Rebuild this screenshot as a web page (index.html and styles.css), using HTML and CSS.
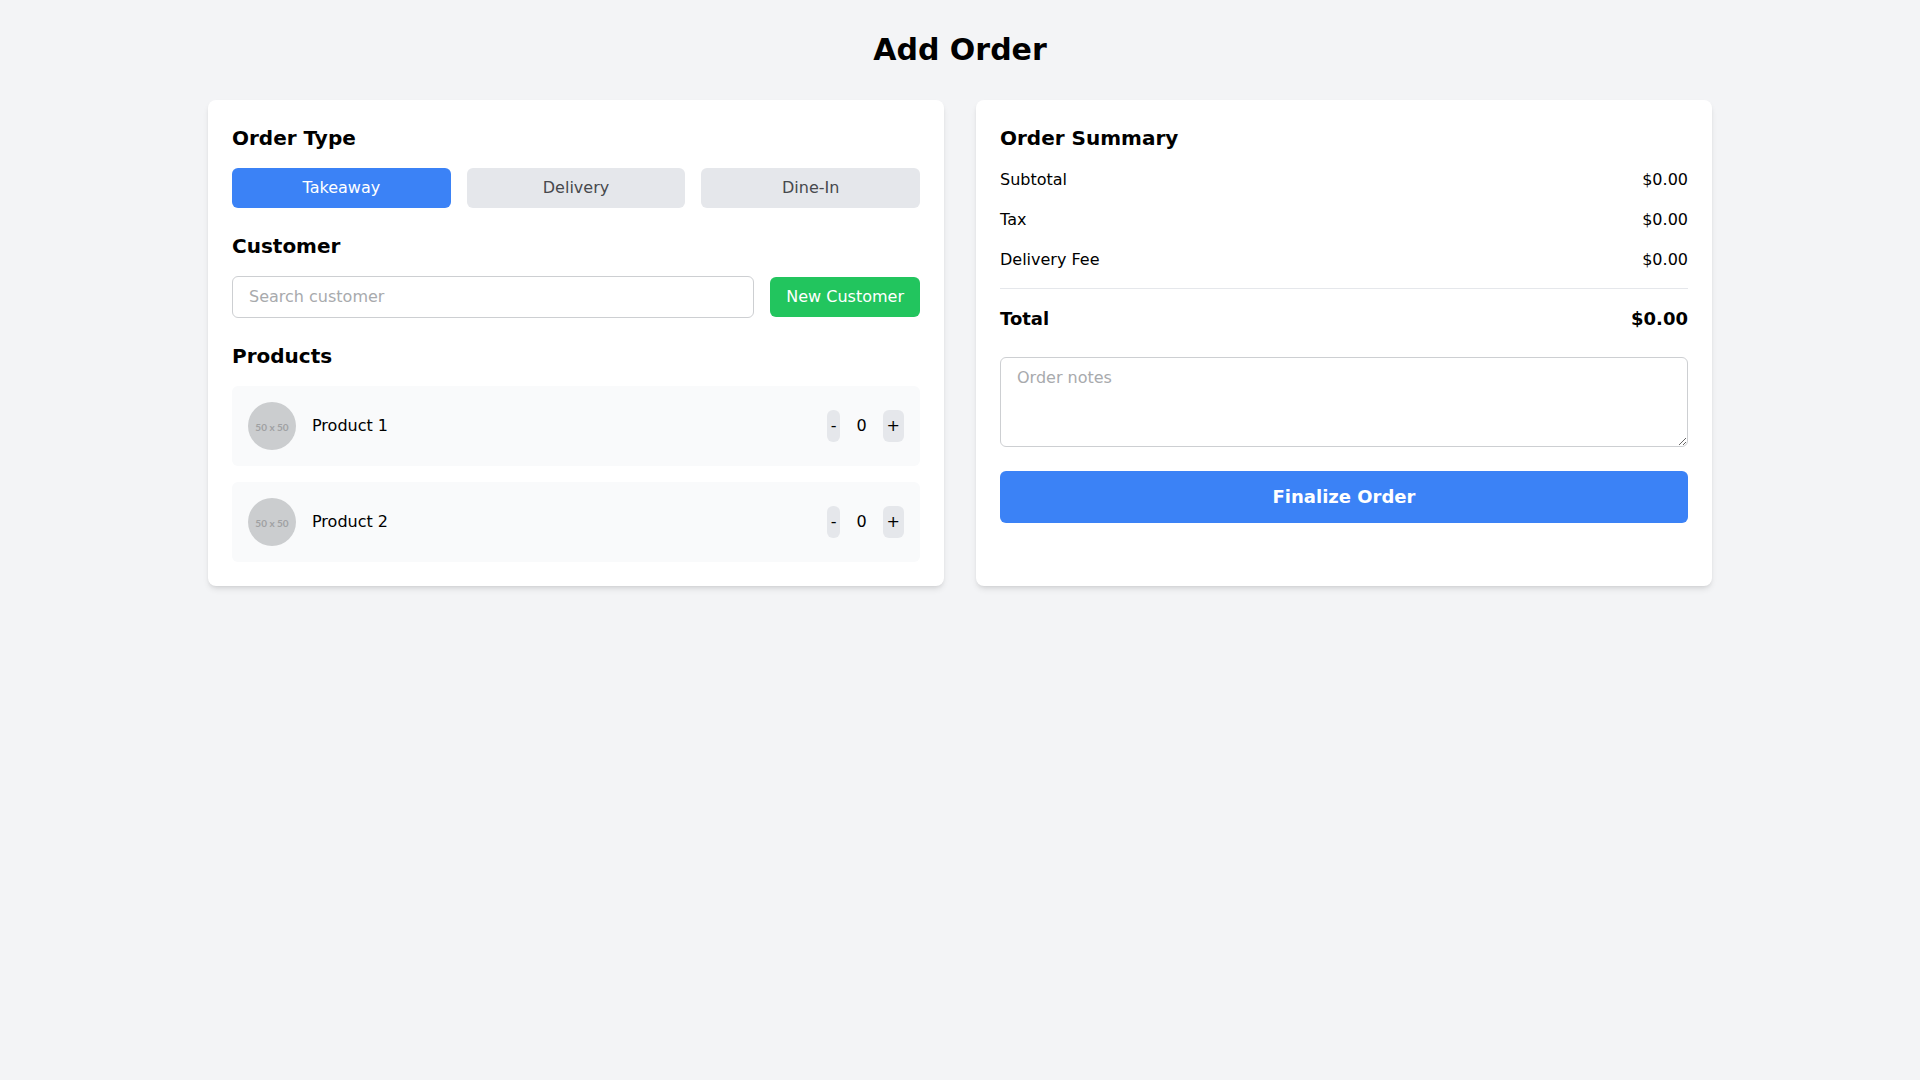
FILE: index.html
```html
<!DOCTYPE html>
<html lang="en">
<head>
<meta charset="UTF-8">
<meta name="viewport" content="width=device-width, initial-scale=1.0">
<title>Add Order</title>
<link rel="stylesheet" href="styles.css">
</head>
<body>
<div class="container">
    <h1>Add Order</h1>
    <form class="order-grid">
        <div class="card">
            <section>
                <h2>Order Type</h2>
                <div class="order-types">
                    <button type="button" class="btn btn-type active">Takeaway</button>
                    <button type="button" class="btn btn-type">Delivery</button>
                    <button type="button" class="btn btn-type">Dine-In</button>
                </div>
            </section>

            <section>
                <h2>Customer</h2>
                <div class="customer-row">
                    <input type="text" class="field" placeholder="Search customer" aria-label="Search customer">
                    <button type="button" class="btn btn-new">New Customer</button>
                </div>
            </section>

            <section>
                <h2>Products</h2>
                <div class="products">
                    <div class="product">
                        <div class="product-info">
                            <svg class="product-img" viewBox="0 0 48 48" role="img" aria-label="Product 1">
                                <circle cx="24" cy="24" r="24"/>
                                <text x="24" y="29">50 x 50</text>
                            </svg>
                            <span>Product 1</span>
                        </div>
                        <div class="quantity">
                            <button type="button" class="btn-qty" aria-label="Remove one Product 1">-</button>
                            <span>0</span>
                            <button type="button" class="btn-qty" aria-label="Add one Product 1">+</button>
                        </div>
                    </div>
                    <div class="product">
                        <div class="product-info">
                            <svg class="product-img" viewBox="0 0 48 48" role="img" aria-label="Product 2">
                                <circle cx="24" cy="24" r="24"/>
                                <text x="24" y="29">50 x 50</text>
                            </svg>
                            <span>Product 2</span>
                        </div>
                        <div class="quantity">
                            <button type="button" class="btn-qty" aria-label="Remove one Product 2">-</button>
                            <span>0</span>
                            <button type="button" class="btn-qty" aria-label="Add one Product 2">+</button>
                        </div>
                    </div>
                </div>
            </section>
        </div>

        <div class="card">
            <h2>Order Summary</h2>
            <div class="summary-row">
                <span>Subtotal</span>
                <span>$0.00</span>
            </div>
            <div class="summary-row">
                <span>Tax</span>
                <span>$0.00</span>
            </div>
            <div class="summary-row">
                <span>Delivery Fee</span>
                <span>$0.00</span>
            </div>
            <div class="summary-row total">
                <span>Total</span>
                <span>$0.00</span>
            </div>
            <textarea class="field notes" rows="3" placeholder="Order notes" aria-label="Order notes"></textarea>
            <button type="submit" class="btn btn-finalize">Finalize Order</button>
        </div>
    </form>
</div>
<script>
// Switch the selected order type
const typeButtons = document.querySelectorAll('.btn-type');
typeButtons.forEach(button => {
    button.addEventListener('click', () => {
        typeButtons.forEach(b => b.classList.remove('active'));
        button.classList.add('active');
    });
});

// Quantity buttons
document.querySelectorAll('.quantity').forEach(box => {
    const [minus, plus] = box.querySelectorAll('button');
    const count = box.querySelector('span');
    minus.addEventListener('click', () => {
        count.textContent = Math.max(0, Number(count.textContent) - 1);
    });
    plus.addEventListener('click', () => {
        count.textContent = Number(count.textContent) + 1;
    });
});
</script>
</body>
</html>
```

FILE: styles.css
```css
:root {
    --blue: #3b82f6;
    --green: #22c55e;
    --gray-50: #f9fafb;
    --gray-100: #f3f4f6;
    --gray-200: #e5e7eb;
    --gray-300: #cdcfd2;
    --gray-400: #a8aaad;
    --gray-700: #47494d;
}

* {
    box-sizing: border-box;
    margin: 0;
    padding: 0;
}

body {
    background: var(--gray-100);
    color: #000;
    font-family: "DejaVu Sans", sans-serif;
    font-size: 16px;
    line-height: 24px;
}

button,
input,
textarea {
    font: inherit;
    color: inherit;
}

.container {
    max-width: 1536px;
    margin: 0 auto;
    padding: 32px 16px;
}

h1 {
    margin-bottom: 32px;
    font-size: 30px;
    line-height: 36px;
    text-align: center;
}

h2 {
    margin-bottom: 16px;
    font-size: 20px;
    line-height: 28px;
}

.order-grid {
    display: grid;
    grid-template-columns: 1fr 1fr;
    gap: 32px;
}

.card {
    background: #fff;
    border-radius: 8px;
    padding: 24px;
    box-shadow: 0 4px 6px -1px rgba(0, 0, 0, 0.1), 0 2px 4px -2px rgba(0, 0, 0, 0.1);
}

section + section {
    margin-top: 24px;
}

/* Buttons and fields */
.btn {
    border: none;
    border-radius: 6px;
    padding: 8px 16px;
    color: #fff;
    cursor: pointer;
}

.btn-type {
    flex: 1;
    background: var(--gray-200);
    color: var(--gray-700);
}

.btn-type.active {
    background: var(--blue);
    color: #fff;
}

.btn-new {
    background: var(--green);
}

.btn-finalize {
    width: 100%;
    padding: 12px;
    background: var(--blue);
    font-size: 18px;
    font-weight: bold;
    line-height: 28px;
}

.field {
    border: 1px solid var(--gray-300);
    border-radius: 6px;
    padding: 8px 16px;
    background: #fff;
}

.field::placeholder {
    color: var(--gray-400);
}

.order-types {
    display: flex;
    gap: 16px;
}

.customer-row {
    display: flex;
    align-items: center;
    gap: 16px;
}

.customer-row .field {
    flex: 1;
    min-width: 0;
}

/* Products */
.products {
    display: grid;
    gap: 16px;
}

.product {
    display: flex;
    align-items: center;
    justify-content: space-between;
    padding: 16px;
    border-radius: 6px;
    background: var(--gray-50);
}

.product-info,
.quantity {
    display: flex;
    align-items: center;
    gap: 16px;
}

.product-img {
    width: 48px;
    height: 48px;
}

.product-img circle {
    fill: #cbcdcf;
}

.product-img text {
    fill: #a0a1a3;
    font-family: Lato, sans-serif;
    font-size: 10px;
    font-weight: bold;
    text-anchor: middle;
}

.btn-qty {
    border: none;
    border-radius: 6px;
    padding: 4px;
    background: var(--gray-200);
    cursor: pointer;
}

/* Summary */
.summary-row {
    display: flex;
    justify-content: space-between;
    margin-bottom: 16px;
}

.summary-row.total {
    margin-bottom: 24px;
    padding-top: 16px;
    border-top: 1px solid var(--gray-200);
    font-size: 18px;
    font-weight: bold;
    line-height: 28px;
}

.notes {
    display: block;
    width: 100%;
    margin-bottom: 24px;
    resize: vertical;
}

@media (max-width: 767px) {
    .order-grid {
        grid-template-columns: 1fr;
    }
}
```
